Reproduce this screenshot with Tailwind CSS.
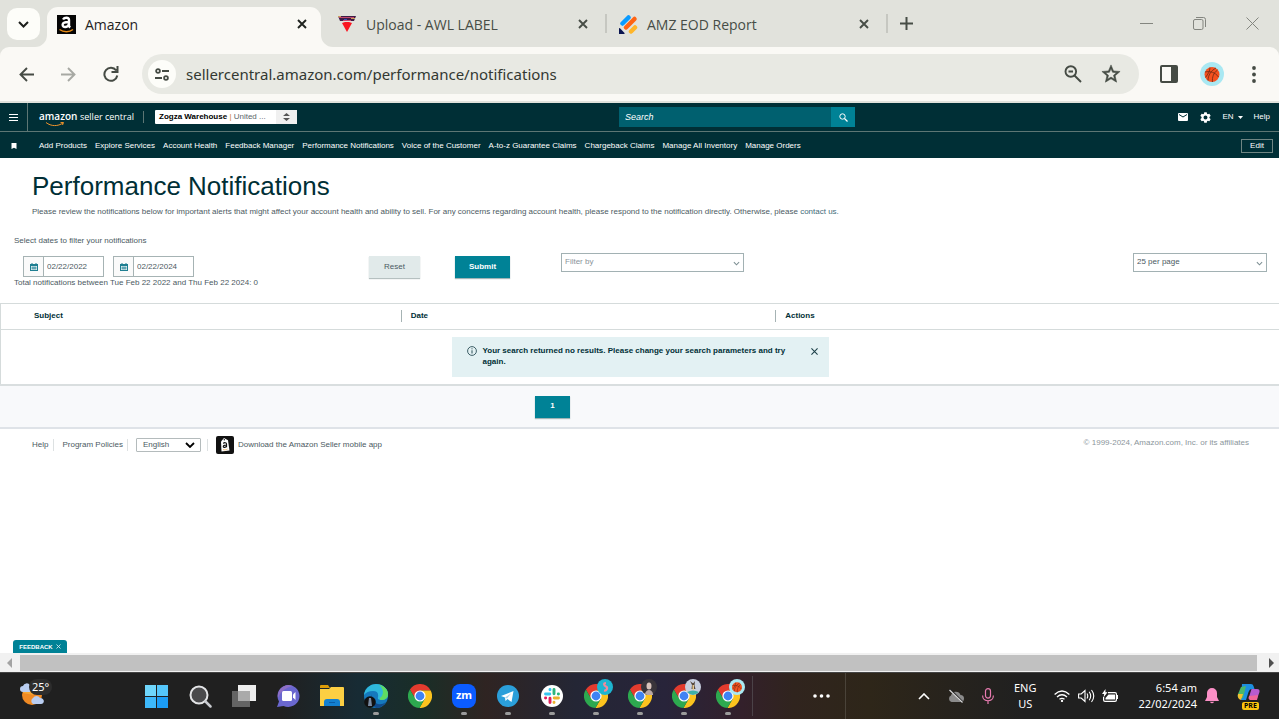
<!DOCTYPE html>
<html lang="en">

<head>
  <meta charset="UTF-8" />
  <meta name="viewport" content="width=device-width, initial-scale=1.0" />
  <title>Amazon</title>
  <script src="https://cdn.jsdelivr.net/npm/@tailwindcss/browser@4"></script>
</head>

<body class="h-screen flex flex-col overflow-hidden bg-white font-['Liberation_Sans',Arial,sans-serif] text-[8px] leading-3 text-[#4b5a62]">
  <!-- Shared icons -->
  <svg class="hidden">
    <symbol id="chrome" viewBox="0 0 24 24">
      <path fill="#e33b2e" d="M7.24 14.75 1.9 5.52A12 12 0 0 1 22.67 6.5H12z" />
      <path fill="#fcc31e" d="M12 6.5h10.67A12 12 0 0 1 11.43 24l5.33-9.25z" />
      <path fill="#2da94f" d="M16.76 14.75 11.43 24A12 12 0 0 1 1.9 5.52l5.34 9.23z" />
      <circle cx="12" cy="12" r="5.6" fill="#fff" />
      <circle cx="12" cy="12" r="4.4" fill="#3f83f3" />
    </symbol>
    <symbol id="close" viewBox="0 0 10 10">
      <path d="M1 1l8 8M9 1L1 9" fill="none" stroke="currentColor" stroke-width="1.9" />
    </symbol>
    <symbol id="calendar" viewBox="0 0 8 8">
      <path fill="#1f7f92" d="M1.500 0h1v1h3V0h1v1H8v7H0V1h1.500z" />
      <path fill="#fff" d="M1 3h6v4H1z" />
      <path fill="#5fa5b3" d="M1.500 3.500h5v3h-5z" />
    </symbol>
    <symbol id="chevron" viewBox="0 0 8 5">
      <path d="M1 1l3 3 3-3" fill="none" stroke="#7d8f93" stroke-width="1.2" />
    </symbol>
    <symbol id="basketball" viewBox="0 0 24 24">
      <circle cx="12" cy="12" r="12" fill="#a9e8f2" />
      <circle cx="12" cy="12.500" r="7.500" fill="#f4511e" />
      <path d="M5 10c5-1 10 0 13.500 5M8 18.500c0-5 3-10 8-12.500M12.500 20c-.5-5 1-9 5-12M5.500 15.500C8 12 10 9 10 5.500" fill="none" stroke="#6b2a14" stroke-width=".8" />
    </symbol>
  </svg>

  <!-- Browser tabs -->
  <div class="shrink-0 h-[47px] flex items-end bg-[#e1e2dc] font-['Open_Sans','Noto_Sans',sans-serif] text-[14px] leading-5 text-[#474d46]">
    <button aria-label="Search tabs" class="self-start mt-2 ml-[7px] mr-[7px] h-8 w-[33px] rounded-[10px] bg-[#fdfdf9] flex items-center justify-center text-[#1d1f1c]">
      <svg class="w-[11px] h-[7px]" viewBox="0 0 11 7"><path d="M1 1l4.500 4.500L10 1" fill="none" stroke="currentColor" stroke-width="2" /></svg>
    </button>
    <div class="relative w-[274px] mr-[7px] h-10 pb-1 rounded-t-[11px] bg-[#faf9f5] flex items-center pl-[10px] pr-3 text-[#1f231f]">
      <svg class="absolute -left-3 bottom-0 size-3 text-[#faf9f5]" viewBox="0 0 12 12"><path d="M12 0v12H0A12 12 0 0 0 12 0z" fill="currentColor" /></svg>
      <svg class="absolute -right-3 bottom-0 size-3 text-[#faf9f5]" viewBox="0 0 12 12"><path d="M0 0v12h12A12 12 0 0 1 0 0z" fill="currentColor" /></svg>
      <svg class="size-[19px] mb-[2px]" viewBox="0 0 19 19">
        <path fill="#050505" d="M0 0h19v19H0z" />
        <path d="M6 4.500C7.500 2 12 2 12 5v5.500q0 1 1.200 2M12 7C8 6.800 5.600 7.800 5.600 9.800c0 3 5 3 6.400-.6" fill="none" stroke="#fff" stroke-width="2.400" />
        <path d="M2.500 14.500c4 3 10 3 13.500 0" fill="none" stroke="#e58a16" stroke-width="1.500" />
      </svg>
      <span class="ml-[9px] flex-1">Amazon</span>
      <button aria-label="Close tab" class="size-[10px] mr-[2px] mb-[2px]"><svg class="size-[10px]"><use href="#close" /></svg></button>
    </div>
    <div class="w-[277px] h-10 pb-1 flex items-center pl-[10px] pr-[17px]">
      <svg class="w-[18px] h-[18px] mb-[2px]" viewBox="0 0 18 18">
        <path fill="#3d1c46" d="M0 1h18l-2 5H2z" />
        <path fill="#c5486f" d="M1 2h15v1H1zM5 5h8v1H5z" />
        <path fill="#c9a05a" d="M0 1h3v1H0zM13 3h4v1h-4z" />
        <path fill="#3a4dba" d="M6 4h3v1H6z" />
        <path fill="#fa1420" d="M4 8l3-1h4l3 1-5 9z" />
      </svg>
      <span class="ml-[10px] flex-1">Upload - AWL LABEL</span>
      <button aria-label="Close tab" class="size-[10px] mb-[2px]"><svg class="size-[10px]"><use href="#close" /></svg></button>
    </div>
    <div class="w-[2px] h-[19px] mb-[14px] bg-[#c6c7c1]"></div>
    <div class="w-[279px] h-10 pb-1 flex items-center pl-3 pr-[17px]">
      <svg class="w-[19px] h-[19px] mb-[2px]" viewBox="0 0 19 19">
        <g fill="none" stroke-width="4.500" stroke-linecap="round">
          <path stroke="#0a9bff" d="M3.500 8.500L9.500 2.500" />
          <path stroke="#ff6414" d="M7 12.500L15.500 4" />
          <path stroke="#ffb629" d="M12 16.500l4-4" />
        </g>
        <path fill="#0a1551" d="M0 13.500q0-1 1-.3L5.500 18q.5 1-.5 1H0z" />
      </svg>
      <span class="ml-[9px] flex-1">AMZ EOD Report</span>
      <button aria-label="Close tab" class="size-[10px] mb-[2px]"><svg class="size-[10px]"><use href="#close" /></svg></button>
    </div>
    <div class="w-[2px] h-[19px] mb-[14px] bg-[#c6c7c1]"></div>
    <button aria-label="New tab" class="ml-3 mb-[17px] size-[13px]"><svg viewBox="0 0 13 13"><path d="M6.500 0v13M0 6.500h13" stroke="currentColor" stroke-width="2" /></svg></button>
    <div class="ml-auto mb-[17px] mr-5 flex items-center gap-10 text-[#83857f]">
      <button aria-label="Minimize" class="size-[13px]"><svg viewBox="0 0 13 13"><path d="M0 6.500h13" stroke="currentColor" /></svg></button>
      <button aria-label="Restore" class="size-[13px]"><svg viewBox="0 0 13 13" fill="none" stroke="currentColor"><rect x=".5" y="2.500" width="9.500" height="10" rx="1.500" /><path d="M3 .5h7.500a2 2 0 0 1 2 2V10" /></svg></button>
      <button aria-label="Close window" class="size-[13px]"><svg viewBox="0 0 13 13"><path d="M.5.5l12 12M12.500.5l-12 12" stroke="currentColor" /></svg></button>
    </div>
  </div>

  <!-- Address bar -->
  <div class="shrink-0 bg-[#e1e2dc]">
    <div class="h-[54px] rounded-t-[9px] bg-[#faf9f5] flex items-center pl-[19px] pr-[17px] text-[#454b44]">
      <button aria-label="Back" class="size-[15px]"><svg viewBox="0 0 15 15"><path d="M15 7.500H1.500M8 1L1.500 7.500 8 14" fill="none" stroke="currentColor" stroke-width="1.900" /></svg></button>
      <button aria-label="Forward" class="size-[15px] ml-[27px] text-[#a7a9a3]"><svg viewBox="0 0 15 15"><path d="M0 7.500h13.500M7 1l6.500 6.500L7 14" fill="none" stroke="currentColor" stroke-width="1.900" /></svg></button>
      <button aria-label="Reload" class="size-4 ml-[27px]"><svg viewBox="0 0 16 16"><path d="M13.200 4.500A6.500 6.500 0 1 0 14.300 9.500M14.500 0v6h-6" fill="none" stroke="currentColor" stroke-width="2" /></svg></button>
      <div class="ml-[23px] flex-1 h-10 rounded-full bg-[#e8e9e3] flex items-center pl-[6px] pr-[18px]">
        <button aria-label="Site information" class="size-7 rounded-full bg-[#fdfdf9] flex items-center justify-center">
          <svg class="w-[14px] h-[13px]" viewBox="0 0 14 13" fill="none" stroke="currentColor" stroke-width="1.800"><circle cx="3" cy="3" r="1.900" /><path d="M7 3h7M0 10h7" /><circle cx="11" cy="10" r="1.900" /></svg>
        </button>
        <input aria-label="Address" type="text" value="sellercentral.amazon.com/performance/notifications" class="ml-[10px] flex-1 min-w-0 h-7 bg-transparent outline-none font-['Noto_Sans','Open_Sans',sans-serif] text-[15px] leading-6 text-[#333832]" />
        <button aria-label="Zoom" class="size-[18px]"><svg viewBox="0 0 18 18" fill="none" stroke="currentColor" stroke-width="1.900"><circle cx="6.800" cy="6.500" r="5.300" /><path d="M4.500 6.500H9M10.500 10.500L17 17" /></svg></button>
        <button aria-label="Bookmark" class="size-5 ml-[19px]"><svg viewBox="1 1 22 22" fill="currentColor"><path d="M22 9.240l-7.190-.62L12 2 9.190 8.630 2 9.240l5.460 4.730L5.820 21 12 17.270 18.180 21l-1.630-7.030L22 9.240zM12 15.400l-3.760 2.270 1-4.280-3.320-2.880 4.380-.38L12 6.100l1.710 4.040 4.380.38-3.320 2.880 1 4.280L12 15.400z" stroke="currentColor" stroke-width=".6" /></svg></button>
      </div>
      <button aria-label="Side panel" class="ml-[21px] w-[18px] h-[18px]"><svg viewBox="0 0 18 18"><rect x="1" y="1" width="16" height="16" rx="1" fill="none" stroke="currentColor" stroke-width="2" /><path d="M11 1h6v16h-6z" fill="currentColor" /></svg></button>
      <button aria-label="Profile" class="ml-[22px] size-6"><svg class="size-6"><use href="#basketball" /></svg></button>
      <button aria-label="Menu" class="ml-[22px] w-4 h-[17px] flex justify-center"><svg class="w-1 h-[17px]" viewBox="0 0 4 17" fill="currentColor"><circle cx="2" cy="2" r="1.900" /><circle cx="2" cy="8.500" r="1.900" /><circle cx="2" cy="15" r="1.900" /></svg></button>
    </div>
    <div class="h-[2px]"></div>
  </div>

  <!-- Seller Central header -->
  <header class="shrink-0 bg-[#002f36] text-white">
    <div class="h-[29px] flex items-center border-b border-[#5d7674]">
      <button aria-label="Open menu" class="self-stretch w-7 border-r border-[#5d7674] flex items-center justify-center"><svg class="w-[9px] h-[7px]" viewBox="0 0 9 7"><path d="M0 .5h9M0 3.500h9M0 6.500h9" stroke="#fff" /></svg></button>
      <a href="#" class="relative ml-[11px] w-[95px] font-['Open_Sans','Noto_Sans',sans-serif] text-[10px] leading-4 whitespace-nowrap pb-[2px]"><span class="font-semibold">amazon</span> <span class="text-[9px]">seller central</span>
        <svg class="absolute left-[6px] bottom-0 w-[20px] h-[5px]" viewBox="0 0 20 5"><path d="M1 .5c5 4 12 4 17 .5M15.500.6l3-.1-1 2.500" fill="none" stroke="#f0932b" /></svg>
      </a>
      <div class="ml-[9px] w-px h-3 bg-[#5d7674]"></div>
      <button class="ml-[11px] w-[142px] h-[14px] rounded-[1px] bg-white flex items-center text-[#5a666a] whitespace-nowrap">
        <span class="pl-1 flex-1 text-left"><b class="text-black">Zogza Warehouse</b> <span class="text-[#c47a2c]">|</span> United ...</span>
        <span class="w-[21px] h-full bg-[#f0f0f0] flex items-center justify-center"><svg class="w-[7px] h-2" viewBox="0 0 7 8"><path fill="#555" d="M3.500 0L7 3H0zM3.500 8L0 5h7z" /></svg></span>
      </button>
      <form class="ml-[322px] w-[236px] h-5 flex">
        <input aria-label="Search" type="text" placeholder="Search" class="flex-1 min-w-0 px-[6px] bg-[#00606f] text-[9px] italic placeholder:text-white outline-none" />
        <button type="button" aria-label="Search" class="w-6 bg-[#008296] flex items-center justify-center"><svg class="size-[9px]" viewBox="0 0 9 9" fill="none" stroke="#fff"><circle cx="3.500" cy="3.500" r="2.700" /><path d="M5.500 5.500L8.500 8.500" stroke-width="1.300" /></svg></button>
      </form>
      <div class="ml-auto mr-[9px] flex items-center">
        <button aria-label="Messages"><svg class="w-[10px] h-[8px]" viewBox="0 0 10 8"><rect width="10" height="8" rx="1" fill="#fff" /><path d="M1 1.500l4 2.500 4-2.500" fill="none" stroke="#002f36" /></svg></button>
        <button aria-label="Settings" class="ml-3"><svg class="size-[11px]" viewBox="2 2 20 20"><path fill="#fff" d="M19.140 12.940c.04-.3.060-.61.060-.94s-.02-.64-.07-.94l2.030-1.580a.49.49 0 0 0 .12-.61l-1.920-3.320a.49.49 0 0 0-.59-.22l-2.390.96a7 7 0 0 0-1.620-.94l-.36-2.540a.48.48 0 0 0-.48-.41h-3.840a.47.47 0 0 0-.47.41l-.36 2.540a7.400 7.400 0 0 0-1.620.94l-2.390-.96a.48.48 0 0 0-.59.22L2.740 8.870a.47.47 0 0 0 .12.61l2.030 1.580a6 6 0 0 0-.02 1.880l-2.030 1.580a.49.49 0 0 0-.12.61l1.920 3.320c.12.22.37.29.59.22l2.390-.96c.5.38 1.030.7 1.620.94l.36 2.540c.05.24.24.41.48.41h3.840c.24 0 .44-.17.470-.41l.36-2.540a7 7 0 0 0 1.620-.94l2.390.96c.22.08.47 0 .59-.22l1.920-3.320a.47.47 0 0 0-.12-.61zM12 15.600a3.600 3.600 0 1 1 0-7.200 3.600 3.600 0 0 1 0 7.200z" /></svg></button>
        <button class="ml-[11px] flex items-center gap-1">EN <svg class="w-[5px] h-[3px]" viewBox="0 0 5 3"><path fill="#fff" d="M0 0h5L2.500 3z" /></svg></button>
        <a href="#" class="ml-[11px]">Help</a>
      </div>
    </div>
    <nav class="h-[26px] pt-px flex items-center gap-2 whitespace-nowrap">
      <svg class="w-[6px] h-[6px] ml-[11px] mr-[14px]" viewBox="0 0 6 6"><path fill="#fff" d="M.5 0h5v6L3 4.800.5 6z" /></svg>
      <a href="#">Add Products</a>
      <a href="#">Explore Services</a>
      <a href="#">Account Health</a>
      <a href="#">Feedback Manager</a>
      <a href="#">Performance Notifications</a>
      <a href="#">Voice of the Customer</a>
      <a href="#">A-to-z Guarantee Claims</a>
      <a href="#">Chargeback Claims</a>
      <a href="#">Manage All Inventory</a>
      <a href="#">Manage Orders</a>
      <button class="ml-auto mr-[6px] w-8 h-[14px] border border-[#6f8583] leading-3">Edit</button>
    </nav>
  </header>

  <main class="flex-1 min-h-0 flex flex-col">
    <div class="px-8 pt-3">
      <h1 class="text-[26px] leading-8 text-[#002f36]">Performance Notifications</h1>
      <p class="mt-1">Please review the notifications below for important alerts that might affect your account health and ability to sell. For any concerns regarding account health, please respond to the notification directly. Otherwise, please <a href="#" class="text-[#3f6b78]">contact us.</a></p>
    </div>

    <!-- Filters -->
    <p class="mt-[17px] ml-[14px]">Select dates to filter your notifications</p>
    <div class="mt-[5px] ml-[14px] mr-3 grid grid-cols-[355px_86px_106px_183px_1fr] items-start">
      <div class="pt-1">
        <div class="ml-[9px] flex gap-[9px]">
          <div class="w-[81px] h-[21px] flex border border-[#a6b3b4]">
            <label for="from" aria-label="From" class="w-5 bg-[#fafafa] border-r border-[#a6b3b4] flex items-center justify-center"><svg class="size-2"><use href="#calendar" /></svg></label>
            <input id="from" type="text" value="02/22/2022" class="flex-1 min-w-0 pl-[3px] outline-none" />
          </div>
          <div class="w-[81px] h-[21px] flex border border-[#a6b3b4]">
            <label for="to" aria-label="To" class="w-5 bg-[#fafafa] border-r border-[#a6b3b4] flex items-center justify-center"><svg class="size-2"><use href="#calendar" /></svg></label>
            <input id="to" type="text" value="02/22/2024" class="flex-1 min-w-0 pl-[3px] outline-none" />
          </div>
        </div>
        <p>Total notifications between Tue Feb 22 2022 and Thu Feb 22 2024: 0</p>
      </div>
      <button class="mt-1 w-[51px] h-[22px] pb-px bg-[#e1eaea] shadow-[0_1px_1px_#b5c0c0]">Reset</button>
      <button class="mt-1 w-[55px] h-[22px] pb-px bg-[#008296] text-white font-bold shadow-[0_1px_1px_#9fb4b6]">Submit</button>
      <div class="relative mt-px">
        <select aria-label="Filter by" class="appearance-none block w-full h-[19px] pl-[3px] pb-[2px] border border-[#a2b1b3] text-[#8a949a] outline-none"><option>Filter by</option></select>
        <svg class="absolute right-1 top-2 w-[7px] h-[5px] pointer-events-none"><use href="#chevron" /></svg>
      </div>
      <div class="relative mt-px justify-self-end w-[134px]">
        <select aria-label="Results per page" class="appearance-none block w-full h-[19px] pl-[3px] pb-[2px] border border-[#a2b1b3] outline-none"><option>25 per page</option></select>
        <svg class="absolute right-1 top-2 w-[7px] h-[5px] pointer-events-none"><use href="#chevron" /></svg>
      </div>
    </div>

    <!-- Results -->
    <table class="mt-[14px] w-full table-fixed border-collapse border-l border-t border-[#d5dbdb] text-[#002f36]">
      <thead>
        <tr class="h-[26px] border-b border-[#d5dbdb] text-left">
          <th class="w-[31.300%] pl-[33px] pb-[2px]">Subject</th>
          <th class="w-[29.300%] pb-[2px]"><div class="h-3 border-l border-[#a6b3b4] pl-[9px]">Date</div></th>
          <th class="pb-[2px]"><div class="h-3 border-l border-[#a6b3b4] pl-[9px]">Actions</div></th>
        </tr>
      </thead>
      <tbody>
        <tr class="border-b-2 border-[#d9dedf]">
          <td colspan="3" class="py-[7px]">
            <div role="alert" class="mx-auto w-[377px] h-10 bg-[#e3f1f3] flex items-start pt-2 pl-[15px] pr-[11px]">
              <svg class="mt-[1px] size-[10px] shrink-0" viewBox="0 0 10 10" fill="none" stroke="#2b4f57"><circle cx="5" cy="5" r="4.400" stroke-width=".9" /><path d="M5 4.300v3.200M5 2.300v1" /></svg>
              <p class="ml-[6px] flex-1 font-bold leading-[11px]">Your search returned no results. Please change your search parameters and try again.</p>
              <button aria-label="Dismiss" class="ml-2 mt-[3px] size-[7px]"><svg class="block size-[7px]" viewBox="0 0 8 8"><path d="M.5.5l7 7M7.500.5l-7 7" stroke="#1b3f47" stroke-width="1.200" /></svg></button>
            </div>
          </td>
        </tr>
      </tbody>
    </table>
    <div class="h-[43px] bg-[#f8f9fb] border-b-2 border-[#dfe3e8] pt-[10px]">
      <button class="block ml-[535px] w-[35px] h-[22px] pb-[2px] bg-[#008296] text-white font-bold shadow-[0_1px_1px_#9fb4b6]">1</button>
    </div>

    <!-- Footer -->
    <footer class="px-8 pt-[7px] flex items-center">
      <a href="#">Help</a>
      <div class="ml-[5px] mr-2 w-px h-3 bg-[#dde1e2]"></div>
      <a href="#">Program Policies</a>
      <div class="ml-1 mr-2 w-px h-3 bg-[#dde1e2]"></div>
      <div class="relative">
        <select aria-label="Language" class="appearance-none block w-[65px] h-[14px] pl-[6px] border border-[#b4bbbc] rounded-[1px] outline-none"><option>English</option></select>
        <svg class="absolute right-[6px] top-1 w-[10px] h-[6px] pointer-events-none" viewBox="0 0 10 6"><path d="M1 1l4 4 4-4" fill="none" stroke="#000" stroke-width="1.800" /></svg>
      </div>
      <div class="ml-[6px] mr-2 w-px h-3 bg-[#dde1e2]"></div>
      <a href="#" class="flex items-center gap-1">
        <svg class="size-[18px]" viewBox="0 0 18 18"><rect width="18" height="18" rx="2" fill="#111" /><path fill="#fff" d="M5 5.500L8 2l4 2.200 1.500 10.300-8 1z" /><circle cx="8.300" cy="3.700" r=".7" fill="#111" /><path d="M7.300 7.500c1-1.200 3.200-1 3.200.6v3.200M10.500 9c-2 0-3.200.4-3.200 1.400 0 1.400 2.600 1.200 3.200-.4" fill="none" stroke="#111" stroke-width="1.200" /><path d="M7 13.500c1.500.6 3 .4 4.500-.4" fill="none" stroke="#f3a847" stroke-width=".7" /></svg>
        Download the Amazon Seller mobile app
      </a>
      <p class="ml-auto -mt-1 -mr-[2px] text-[#8b969b]">© 1999-2024, Amazon.com, Inc. or its affiliates</p>
    </footer>

    <button class="mt-auto ml-[13px] w-[54px] h-[13px] rounded-t-[3px] bg-[#008296] text-white text-[6px] font-bold flex items-center justify-center gap-[3px]">FEEDBACK <svg class="size-[5px]" viewBox="0 0 5 5"><path d="M.5.5l4 4M4.500.5l-4 4" stroke="#cfe8ec" stroke-width=".9" /></svg></button>

    <!-- Horizontal scrollbar -->
    <div class="shrink-0 h-[19px] bg-[#f1f1f1] flex items-center px-[7px] pt-px">
      <svg class="w-[5px] h-[10px]" viewBox="0 0 5 10"><path fill="#a3a3a3" d="M5 0v10L0 5z" /></svg>
      <div class="ml-2 mr-3 flex-1 h-4 bg-[#c1c1c1]"></div>
      <svg class="w-[5px] h-[10px] -mr-[2px]" viewBox="0 0 5 10"><path fill="#505050" d="M0 0v10l5-5z" /></svg>
    </div>
  </main>

  <!-- Taskbar -->
  <div class="shrink-0 h-[47px] border-t border-[#444] flex items-center bg-[linear-gradient(90deg,#202020_22%,#172b34_28%,#1a2e27_33%,#2f2422_38%,#242635_45%,#28243a_52%,#33202b_58%,#30241e_62%,#2e2619_68%,#202020_80%)] text-white font-['Noto_Sans','Open_Sans',sans-serif] text-[11px] leading-4">
    <div class="flex-1 self-stretch flex items-center">
      <button class="relative w-[134px] h-full pl-5">
        <svg class="w-[26px] h-[26px]" viewBox="0 0 26 26"><circle cx="12" cy="12" r="10" fill="#f08a24" /><path d="M3 10q0-6 5-8l6 10z" fill="#f7a735" /><path fill="#b9cdf0" d="M3 9a3 3 0 0 1 0-6 4 4 0 0 1 7-1v7zM13 21a3.500 3.500 0 0 1 0-6 4 4 0 0 1 7 0c5 0 5 6 1 6z" /></svg>
        <span class="absolute left-[29px] top-[6px] px-[3px] rounded-full bg-[#2d2d2d] leading-4">25°</span>
      </button>
      <button aria-label="Start" class="w-11 flex justify-center"><svg class="size-[23px]" viewBox="0 0 23 23"><path fill="#6fd6fb" d="M0 0h11v11H0z" /><path fill="#54c6fa" d="M12 0h11v11H12z" /><path fill="#3db8fa" d="M0 12h11v11H0z" /><path fill="#1b9cf5" d="M12 12h11v11H12z" /></svg></button>
      <button aria-label="Search" class="w-11 flex justify-center"><svg class="size-[23px]" viewBox="0 0 23 23"><circle cx="10" cy="10" r="8.500" fill="#4a4a4c" stroke="#e3e4e6" stroke-width="2" /><path d="M16.500 16.500l5 5" stroke="#c9cbd0" stroke-width="2.500" stroke-linecap="round" /></svg></button>
      <button aria-label="Task view" class="w-11 flex justify-center"><svg class="w-6 h-[22px]" viewBox="0 0 24 22"><path fill="#eee" d="M6 0h18v16H6z" /><path fill="#6b6b6b" fill-opacity=".9" d="M0 6h18v16H0z" /><path fill="#aaa" d="M6 6h12v10H6z" /></svg></button>
      <button aria-label="Chat" class="w-11 flex justify-center"><svg class="size-[23px]" viewBox="0 0 23 23"><path fill="#6a67cf" d="M11.500 0a11.300 11 0 1 1-5 21L0 22l2-5.500A11.300 11 0 0 1 11.500 0z" /><path fill="#8f6fc6" d="M11.500 0A11 11 0 0 0 1 13q4-10 15-12z" /><rect x="5" y="6" width="10" height="10" rx="1.500" fill="#fff" /><path fill="#fff" d="M16 9.500l2.500-2.500v8L16 12.500z" /></svg></button>
      <button aria-label="File Explorer" class="w-11 flex justify-center"><svg class="w-6 h-[22px]" viewBox="0 0 24 22"><path fill="#dd9c08" d="M0 1q0-1 1-1h7l2 3H0z" /><path fill="#fccf43" d="M0 4h9l2-2h12q1 0 1 1v18H0z" /><path fill="#1380d0" d="M4 17q0-3 3-3h10q3 0 3 3v4H4z" /><path fill="#0a5da8" d="M9 17h6v1H9z" /></svg></button>
      <button aria-label="Edge" class="relative w-11 h-full flex items-center justify-center"><svg class="size-6" viewBox="0 0 24 24"><circle cx="12" cy="12" r="12" fill="#1579bd" /><path fill="#2fb8dc" d="M0 11A12 12 0 0 1 12 0c7 0 12 5 12 10q0 6-7 6-4 0-3-3 1-6-5-6-6 0-9 4z" /><path fill="#5fdc62" d="M15 .5c6 1.500 9 6 9 9.500q0 6-7 6-3-1 1-4 3-6-3-11.500z" /><path fill="#114a8b" d="M8 10q-1 8 6 10 4 1 8-2-4 6-10 6Q5 20 8 10z" /><circle cx="6" cy="18" r="5.800" fill="#111" /><path d="M5 14h2l1 8H4z" fill="#7a8ba2" /></svg><span class="absolute bottom-1 w-[6px] h-[3px] rounded-full bg-[#9b9b9b]"></span></button>
      <button aria-label="Chrome" class="w-11 flex justify-center"><svg class="size-6"><use href="#chrome" /></svg></button>
      <button aria-label="Zoom" class="relative w-11 h-full flex items-center justify-center"><span class="size-6 rounded-[8px] bg-[#0b5cff] font-bold text-[11px] leading-[22px] text-center">zm</span><span class="absolute bottom-1 w-[6px] h-[3px] rounded-full bg-[#9b9b9b]"></span></button>
      <button aria-label="Telegram" class="relative w-11 h-full flex items-center justify-center"><svg class="size-[22px]" viewBox="0 0 22 22"><circle cx="11" cy="11" r="11" fill="#2b9fda" /><path fill="#fff" d="M4 11l12.500-5-2 11-4-3-2 2-.5-3.500z" /><path d="M8 12.500l6-4-4 5" fill="#a9d3ea" /></svg><span class="absolute bottom-1 w-[6px] h-[3px] rounded-full bg-[#9b9b9b]"></span></button>
      <button aria-label="Slack" class="relative w-11 h-full flex items-center justify-center"><svg class="size-[22px]" viewBox="0 0 22 22"><circle cx="11" cy="11" r="11" fill="#fff" /><g fill="none" stroke-width="2.900" stroke-linecap="round"><path stroke="#36c5f0" d="M4.500 9h4.300M9 4.500v.2" /><path stroke="#2eb67d" d="M13 4.500v4.300M17.300 9h.2" /><path stroke="#ecb22e" d="M13.200 13h4.300M13 17.300v.2" /><path stroke="#e01e5a" d="M9 13.200v4.300M4.500 13h.2" /></g></svg><span class="absolute bottom-1 w-[6px] h-[3px] rounded-full bg-[#9b9b9b]"></span></button>
      <button aria-label="Chrome profile 1" class="relative w-11 h-full flex items-center justify-center"><svg class="size-6"><use href="#chrome" /></svg><svg class="absolute left-[23px] top-[6px] size-4" viewBox="0 0 16 16"><circle cx="8" cy="8" r="8" fill="#1eb5d0" /><path d="M9 4c-3 0-2 2.500 0 3.500s1 4.500-2 4" fill="none" stroke="#ef8a9c" stroke-width="2.200" /></svg><span class="absolute bottom-1 w-[6px] h-[3px] rounded-full bg-[#9b9b9b]"></span></button>
      <button aria-label="Chrome profile 2" class="relative w-11 h-full flex items-center justify-center"><svg class="size-6"><use href="#chrome" /></svg><svg class="absolute left-[23px] top-[6px] size-4" viewBox="0 0 16 16"><circle cx="8" cy="8" r="8" fill="#39343a" /><ellipse cx="8" cy="7" rx="2.500" ry="3.500" fill="#d9c3bb" /><path fill="#b9a8a6" d="M4 15q1-4 4-4t4 4-8 0z" /></svg><span class="absolute bottom-1 w-[6px] h-[3px] rounded-full bg-[#9b9b9b]"></span></button>
      <button aria-label="Chrome profile 3" class="relative w-11 h-full flex items-center justify-center"><svg class="size-6"><use href="#chrome" /></svg><svg class="absolute left-[23px] top-[6px] size-4" viewBox="0 0 16 16"><circle cx="8" cy="8" r="8" fill="#c7cede" /><path fill="#55483c" d="M5 2l2.500 2h1L10 2 9.500 6.500l1 3.500h-4l.5-4z" /><path fill="#e9c98f" d="M7.500 6h1.500v5H7.500z" /><path fill="#3fb0a6" d="M2 13q6-3 12 0-6 6-12 0z" /></svg><span class="absolute bottom-1 w-[6px] h-[3px] rounded-full bg-[#9b9b9b]"></span></button>
      <button aria-label="Chrome profile 4" class="relative w-11 h-full flex items-center justify-center"><svg class="size-6"><use href="#chrome" /></svg><svg class="absolute left-[23px] top-[6px] size-4"><use href="#basketball" /></svg><span class="absolute bottom-1 w-[6px] h-[3px] rounded-full bg-[#9b9b9b]"></span></button>
      <div class="ml-[2px] w-px h-10 bg-[#4b4248]"></div>
    </div>
    <button aria-label="More apps" class="w-12 h-full flex items-center justify-center"><svg class="w-[17px] h-1" viewBox="0 0 17 4" fill="#fff"><circle cx="2" cy="2" r="1.800" /><circle cx="8.500" cy="2" r="1.800" /><circle cx="15" cy="2" r="1.800" /></svg></button>
    <div class="w-px h-full bg-[#4a4339]"></div>
    <div class="w-[433px] h-full flex items-center justify-end">
      <button aria-label="Show hidden icons"><svg class="block w-3 h-[7px]" viewBox="0 0 12 7"><path d="M1 6l5-5 5 5" fill="none" stroke="#fff" stroke-width="1.600" /></svg></button>
      <svg class="ml-[18px] w-4 h-[14px]" viewBox="0 0 16 14"><path fill="#8b8b8b" d="M3.500 13a3.500 3.500 0 0 1-.5-6.500A5 5 0 0 1 12.500 6a3.500 3.500 0 0 1 0 7z" /><path d="M1.500 0l13 13" stroke="#202020" stroke-width="2" /><path d="M1.500 1l13 12.500" stroke="#d8d8d8" stroke-width="1.200" /></svg>
      <svg class="ml-[18px] w-3 h-4" viewBox="0 0 12 16" fill="none" stroke="#e77bb0" stroke-width="1.200"><rect x="3.500" y=".6" width="5" height="9.500" rx="2.500" /><path d="M.6 7.500c0 7 10.800 7 10.800 0M6 12.800V16" /></svg>
      <div class="ml-5 text-center"><div>ENG</div><div>US</div></div>
      <svg class="ml-[18px] w-4 h-3" viewBox="0 0 16 12" fill="none" stroke="#fff" stroke-width="1.300"><path d="M.6 4.500q7.400-7 14.800 0M3 7q5-4.500 10 0M5.500 9.300q2.500-2 5 0" /><circle cx="8" cy="11" r=".5" /></svg>
      <svg class="ml-2 w-[17px] h-[14px]" viewBox="0 0 17 14" fill="none" stroke="#fff" stroke-width="1.100"><path d="M.6 5v4h2.600L7 12.500v-11L3.200 5zM9 4.500q1.500 2.500 0 5M11.200 2.800q3 4.200 0 8.400M13.500 1q4.500 6 0 12" /></svg>
      <svg class="ml-[7px] w-4 h-[14px]" viewBox="0 0 16 14"><path d="M6 3.600h7q1.400 0 1.400 1.400v6q0 1.400-1.400 1.400H3q-1.400 0-1.400-1.400V8" fill="none" stroke="#fff" stroke-width="1.200" /><path fill="#fff" d="M6.500 5.500H13v5H3.500V9zM15 6h1v4h-1zM3.500 0L0 5h2.200L1.500 8.500 5.500 3.300H3.400z" /></svg>
      <div class="ml-5 text-right"><div>6:54 am</div><div>22/02/2024</div></div>
      <svg class="ml-2 w-[14px] h-4" viewBox="0 0 14 16" fill="#fb8fc6"><path d="M7 0a5 5 0 0 1 5 5v4l2 4H0l2-4V5a5 5 0 0 1 5-5zM4.800 13.800h4.400q-2.200 3-4.400 0z" /></svg>
      <button aria-label="Copilot" class="relative ml-[18px] mr-[18px] w-6 h-6 pb-1"><svg class="w-[23px] h-[20px]" viewBox="0 0 23 20"><path fill="#1d8fe0" d="M5 0h9q2 0 2.500 2l1 3h-3q-2 0-3 3L9 16H4z" /><path fill="#4cb86a" d="M4 3l5-1-3 12H2q-2-1-1-4z" /><path fill="#f2c12f" d="M1 10h5l-2 6q-4-1-3-6z" /><path fill="#b75bd0" d="M14.500 5H20q3 0 2.500 3L20 15h-7q-2 0-1-2z" /><path fill="#f0659a" d="M12 12l9-1-1 5h-7q-2-1-1-4z" /></svg>
        <span class="absolute left-[5px] -bottom-[2px] px-[2px] rounded-[2px] bg-[#fcc50f] text-black text-[7px] leading-2 font-bold">PRE</span></button>
    </div>
  </div>
</body>

</html>
